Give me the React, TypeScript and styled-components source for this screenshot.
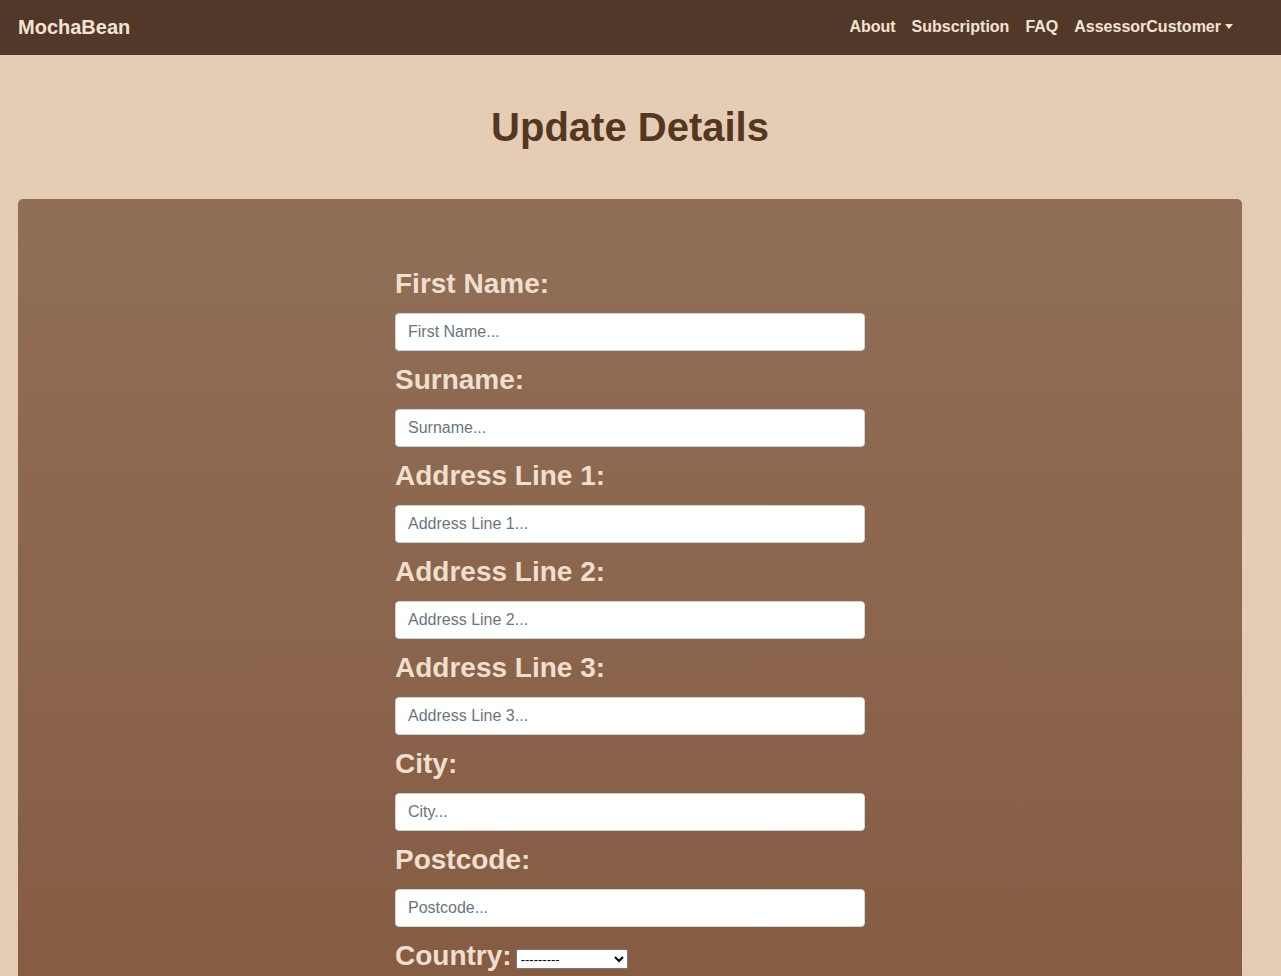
import styled, { createGlobalStyle } from "styled-components";

const GlobalStyle = createGlobalStyle`
  body {
    margin: 0;
    background: #e5ccb4;
    font-family: "Liberation Sans", Arial, sans-serif;
  }
`;

const NavBar = styled.nav`
  height: 55px;
  background: #523828;
  display: flex;
  align-items: center;
  justify-content: space-between;
  padding: 0 40px 1px 18px;
  box-sizing: border-box;
`;

const Brand = styled.a`
  color: #f3e3d3;
  font-size: 20px;
  font-weight: bold;
  text-decoration: none;
`;

const NavLinks = styled.div`
  display: flex;
  align-items: center;
`;

const NavLink = styled.a`
  color: #f3e3d3;
  font-size: 16px;
  font-weight: bold;
  padding: 0 8px;
  text-decoration: none;
  display: flex;
  align-items: center;
`;

const Caret = styled.span`
  display: inline-block;
  margin-left: 4px;
  border-top: 5px solid #f3e3d3;
  border-left: 4.5px solid transparent;
  border-right: 4.5px solid transparent;
  margin-top: -2px;
`;

const Main = styled.main`
  padding: 0 39px 0 18px;
`;

const Title = styled.h1`
  margin: 0;
  padding: 48px 0 47px;
  text-align: center;
  color: #553621;
  font-size: 40px;
  line-height: 49px;
  font-weight: bold;
`;

const Card = styled.section`
  background: linear-gradient(#916f57, #845a40 100%);
  border-radius: 5px 5px 0 0;
  min-height: 800px;
  padding-top: 68px;
  display: flex;
  justify-content: center;
`;

const Form = styled.form`
  width: 470px;
`;

const Label = styled.label`
  display: block;
  color: #f0dfcf;
  font-size: 28px;
  font-weight: bold;
  line-height: 34px;
  margin-bottom: 12px;
`;

const Input = styled.input`
  display: block;
  box-sizing: border-box;
  width: 100%;
  height: 38px;
  margin: 0 0 12px;
  padding: 0 12px;
  border: 1px solid #ced4da;
  border-radius: 4px;
  background: #fff;
  font-family: "Liberation Sans", Arial, sans-serif;
  font-size: 16px;
  color: #212529;
  &::placeholder {
    color: #6c757d;
  }
`;

const InlineLabel = styled(Label)`
  display: flex;
  align-items: flex-end;
  gap: 4px;
`;

const Select = styled.select`
  width: 112px;
  height: 20px;
  font-size: 13px;
  font-family: "Liberation Sans", Arial, sans-serif;
  margin-bottom: 4px;
`;

const fields = [
  "First Name",
  "Surname",
  "Address Line 1",
  "Address Line 2",
  "Address Line 3",
  "City",
  "Postcode",
];

export default function App() {
  return (
    <>
      <GlobalStyle />
      <NavBar>
        <Brand href="#">MochaBean</Brand>
        <NavLinks>
          <NavLink href="#">About</NavLink>
          <NavLink href="#">Subscription</NavLink>
          <NavLink href="#">FAQ</NavLink>
          <NavLink href="#">
            AssessorCustomer
            <Caret />
          </NavLink>
        </NavLinks>
      </NavBar>
      <Main>
        <Title>Update Details</Title>
        <Card>
          <Form>
            {fields.map((f) => (
              <div key={f}>
                <Label>{f}:</Label>
                <Input placeholder={`${f}...`} />
              </div>
            ))}
            <InlineLabel>
              Country:
              <Select>
                <option>---------</option>
              </Select>
            </InlineLabel>
          </Form>
        </Card>
      </Main>
    </>
  );
}
